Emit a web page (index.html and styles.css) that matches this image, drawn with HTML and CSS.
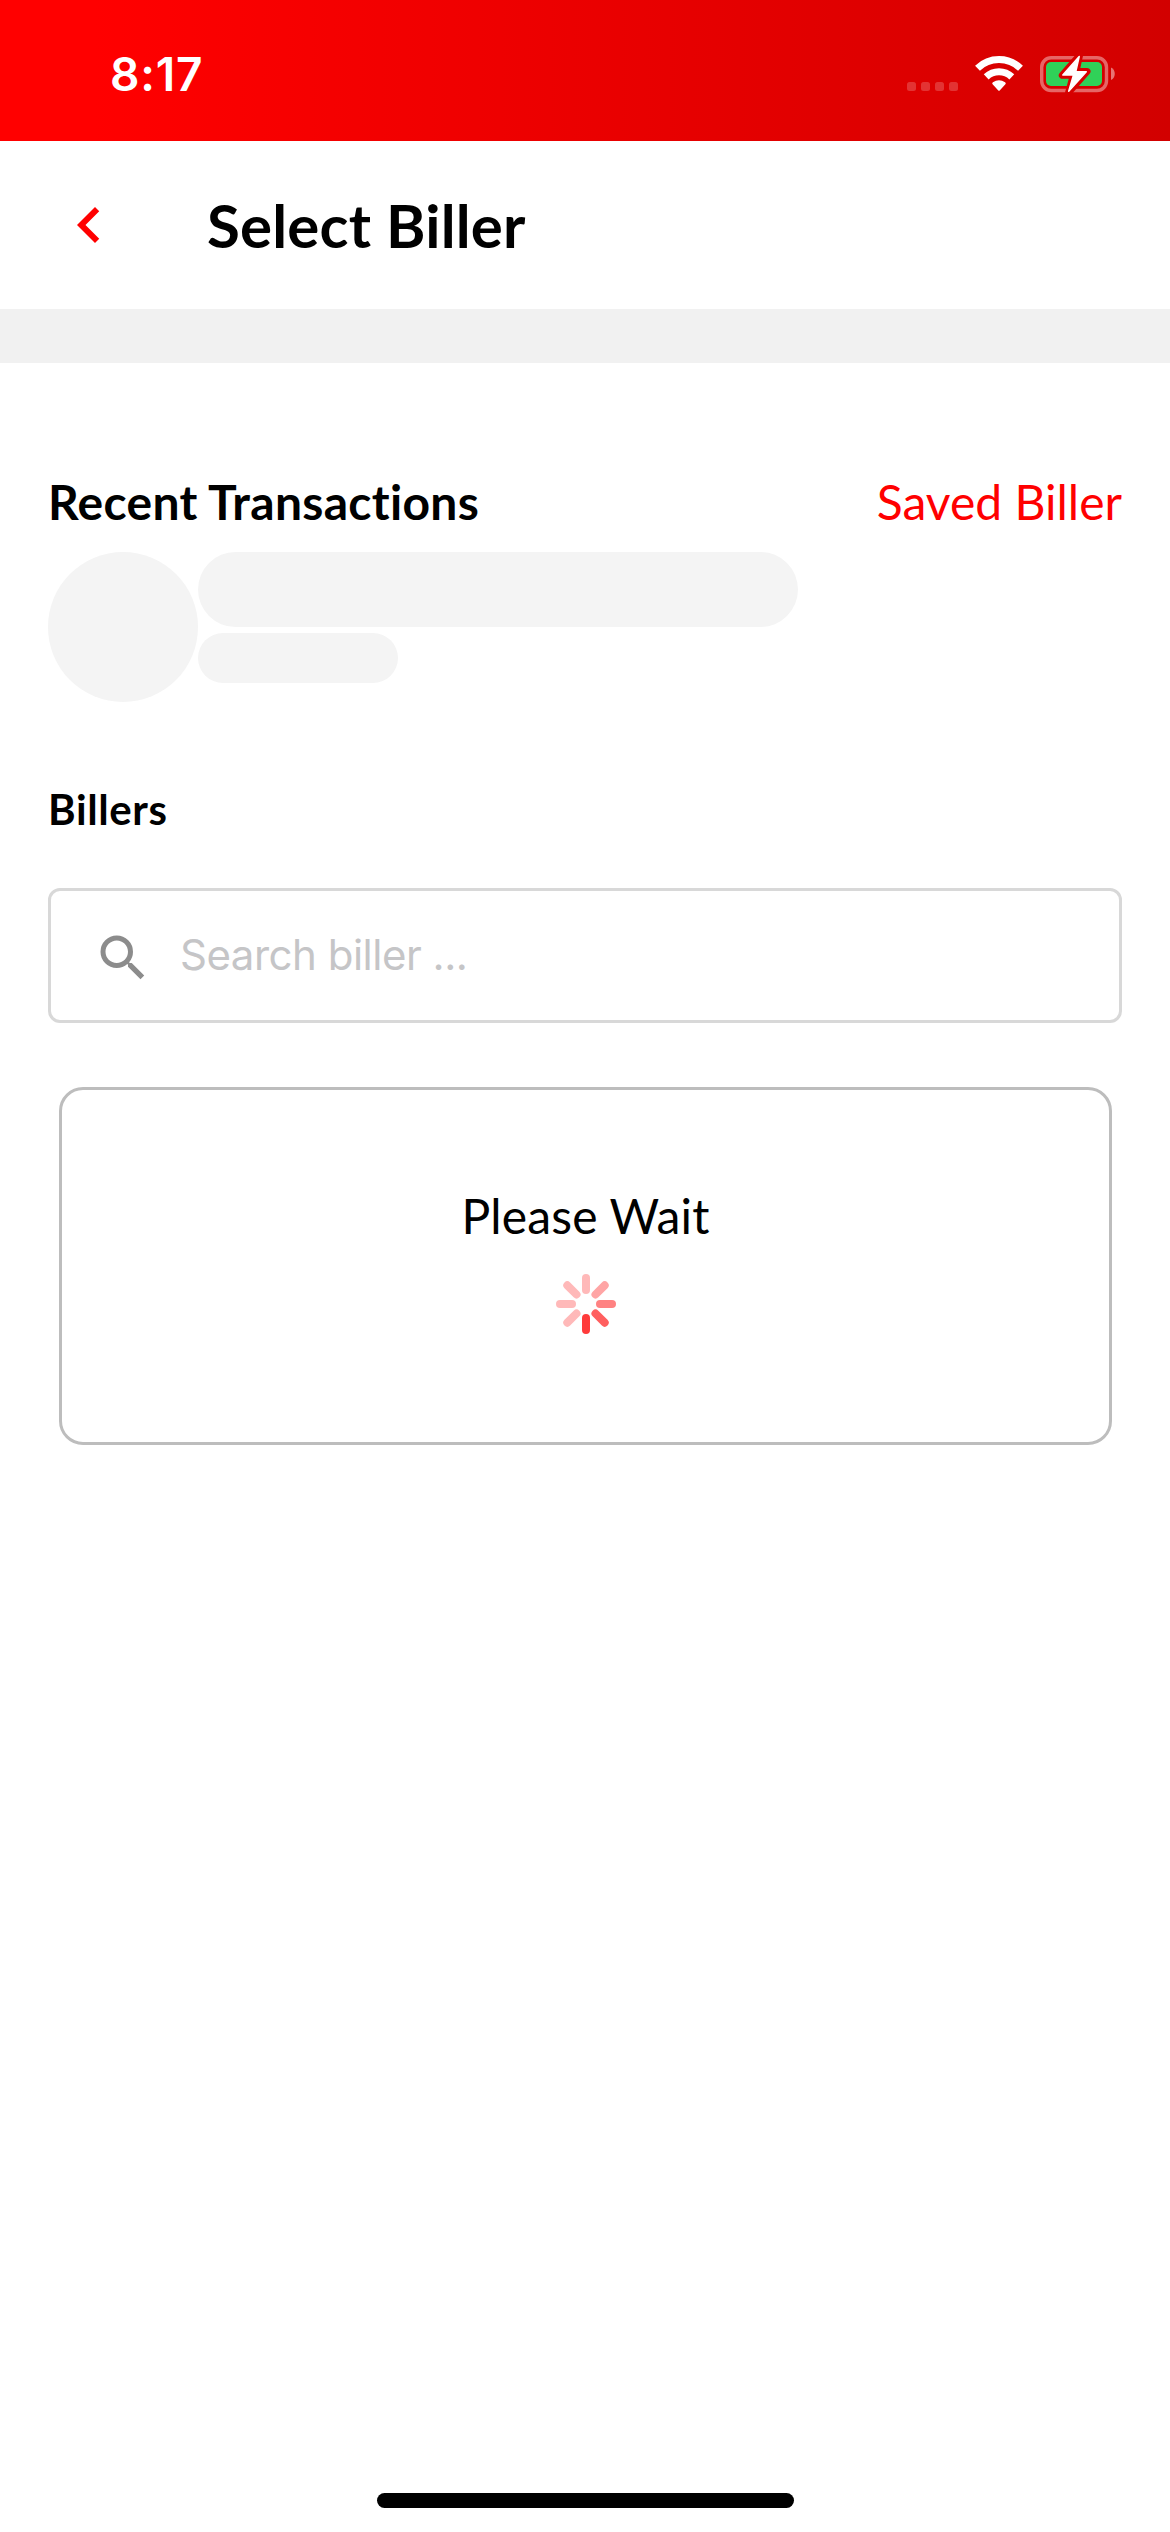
FILE: index.html
```html
<!DOCTYPE html>
<html lang="en">
<head>
<meta charset="utf-8">
<title>Select Biller</title>
<link rel="stylesheet" href="styles.css">
</head>
<body>
<div class="screen">
  <div class="status-bar">
    <span class="time">8:17</span>
    <svg class="status-icons" width="210" height="42" viewBox="0 0 210 42">
      <g fill="#fff" fill-opacity=".2">
        <rect x="2" y="30" width="9" height="9" rx="2.5"/>
        <rect x="16" y="30" width="9" height="9" rx="2.5"/>
        <rect x="30" y="30" width="9" height="9" rx="2.5"/>
        <rect x="44" y="30" width="9" height="9" rx="2.5"/>
      </g>
      <g fill="none" stroke="#fff" stroke-width="7">
        <path d="M72.5 16.2a31 31 0 0 1 43 0"/>
        <path d="M81.200 24.900a18.500 18.500 0 0 1 25.600 0"/>
      </g>
      <path fill="#fff" d="M87.600 32.200Q86.600 31 87.900 30.200Q94 26.300 100.100 30.200Q101.400 31 100.400 32.200L94.700 38.500Q94 39.200 93.300 38.500Z"/>
      <rect x="136.700" y="5.700" width="64.800" height="32.800" rx="9.500" fill="none" stroke="#fff" stroke-opacity=".4" stroke-width="3.400"/>
      <path fill="#fff" fill-opacity=".45" d="M206 12.500c5 2 5 10.500 0 12.500z" transform="translate(0 3)"/>
      <rect x="141" y="10" width="56" height="24" rx="5" fill="#30d158"/>
      <path class="bolt-gap" d="M174.500 3.500L157.300 23.300H168.300L163.700 40.200L182 19.400H171Z"/>
      <path class="bolt" d="M174.200 4.500L157.800 22.900H168.500L163.700 39.200L181.300 19.700H170.800Z"/>
    </svg>
  </div>
  <header class="header">
    <svg class="back" width="72" height="72" viewBox="0 0 24 24"><path fill="#f00" d="M15.410 7.410 14 6l-6 6 6 6 1.410-1.410L10.830 12z"/></svg>
    <h1 class="title">Select Biller</h1>
  </header>
  <div class="divider"></div>
  <main class="content">
    <div class="section-head">
      <h2 class="heading">Recent Transactions</h2>
      <a class="saved">Saved Biller</a>
    </div>
    <div class="skeleton">
      <div class="sk-avatar"></div>
      <div class="sk-lines">
        <div class="sk-line"></div>
        <div class="sk-line sk-short"></div>
      </div>
    </div>
    <h3 class="subheading">Billers</h3>
    <div class="search">
      <svg width="60" height="60" viewBox="0 0 24 24"><path fill="#8c8c8c" d="M15.500 14h-.790l-.280-.270A6.470 6.470 0 0 0 16 9.500 6.500 6.500 0 1 0 9.500 16c1.610 0 3.090-.590 4.230-1.570l.270.280v.790l5 4.990L20.490 19l-4.990-5zm-6 0C7.010 14 5 11.990 5 9.500S7.010 5 9.500 5 14 7.010 14 9.500 11.990 14 9.500 14z"/></svg>
      <span class="placeholder">Search biller ...</span>
    </div>
    <div class="wait">
      <span class="wait-text">Please Wait</span>
      <svg width="60" height="60" viewBox="-30 -30 60 60" stroke="#ff3b3b" stroke-width="8" stroke-linecap="round">
        <path stroke="#ffb9b9" d="M0-14V-26"/>
        <path stroke="#ffa5a5" d="M9.500-9.500L18.700-18.700"/>
        <path stroke="#ff8282" d="M14 0H26"/>
        <path stroke="#ff5f5f" d="M9.500 9.500L18.700 18.700"/>
        <path stroke="#ff3b3b" d="M0 14V26"/>
        <path stroke="#ffb9b9" d="M-9.500 9.500L-18.700 18.700"/>
        <path stroke="#ffb9b9" d="M-14 0H-26"/>
        <path stroke="#ffb9b9" d="M-9.500-9.500L-18.700-18.700"/>
      </svg>
    </div>
  </main>
  <div class="home-bar"></div>
</div>
</body>
</html>
```
FILE: styles.css
```css
* { box-sizing: border-box; }
body {
  margin: 0;
  background: #fff;
  color: #000;
  font-family: Lato, sans-serif;
  font-variant-ligatures: none;
}
h1, h2, h3 { margin: 0; font-weight: 700; }
svg { display: block; flex: none; }

.screen { width: 1170px; height: 2532px; display: flex; flex-direction: column; }

.status-bar {
  height: 141px;
  padding: 46px 55px 0 110px;
  display: flex;
  justify-content: space-between;
  align-items: flex-start;
  background: linear-gradient(90deg, #f00 0%, #f00 8%, #d20000 100%);
}
.time { font: 600 46px/56px Inter, sans-serif; letter-spacing: .8px; color: #fff; }
.status-icons { margin-top: 6px; }
.bolt-gap { fill: #d80000; stroke: #d80000; stroke-width: 7; stroke-linejoin: round; }
.bolt { fill: #fff; stroke: #fff; stroke-width: 1.5; stroke-linejoin: round; }

.header { height: 168px; padding-left: 53px; display: flex; align-items: center; gap: 82px; }
.title { font-size: 60px; line-height: 72px; letter-spacing: .2px; }
.divider { height: 54px; background: #f1f1f1; }

.content { flex: 1; padding: 110px 48px 0; display: flex; flex-direction: column; }
.section-head { display: flex; justify-content: space-between; }
.heading, .saved { font-size: 48px; line-height: 58px; }
.heading { letter-spacing: .3px; }
.saved { color: #f00; }

.skeleton { margin-top: 21px; display: flex; }
.sk-avatar { width: 150px; height: 150px; border-radius: 50%; background: #f4f4f4; }
.sk-lines { display: flex; flex-direction: column; gap: 6px; }
.sk-line { width: 600px; height: 75px; border-radius: 38px; background: #f4f4f4; }
.sk-short { width: 200px; height: 50px; border-radius: 25px; }

.subheading { margin-top: 82px; font-size: 42px; line-height: 50px; letter-spacing: .6px; }

.search {
  height: 135px;
  margin-top: 54px;
  padding: 4px 42px 0;
  display: flex;
  align-items: center;
  gap: 27px;
  border: 3px solid #d8d8d8;
  border-radius: 12px;
}
.placeholder {
  padding-bottom: 5px;
  font: 400 42px/50px Inter, sans-serif;
  letter-spacing: -.5px;
  color: #c5c5c7;
}

.wait {
  width: 1053px;
  height: 358px;
  margin: 64px 0 0 11px;
  padding-top: 97px;
  display: flex;
  flex-direction: column;
  align-items: center;
  gap: 29px;
  border: 3px solid #bdbdbd;
  border-radius: 24px;
}
.wait-text { font-size: 48px; line-height: 58px; letter-spacing: .15px; }

.home-bar { width: 417px; height: 15px; margin: 0 0 24px 377px; border-radius: 8px; background: #000; }
```
